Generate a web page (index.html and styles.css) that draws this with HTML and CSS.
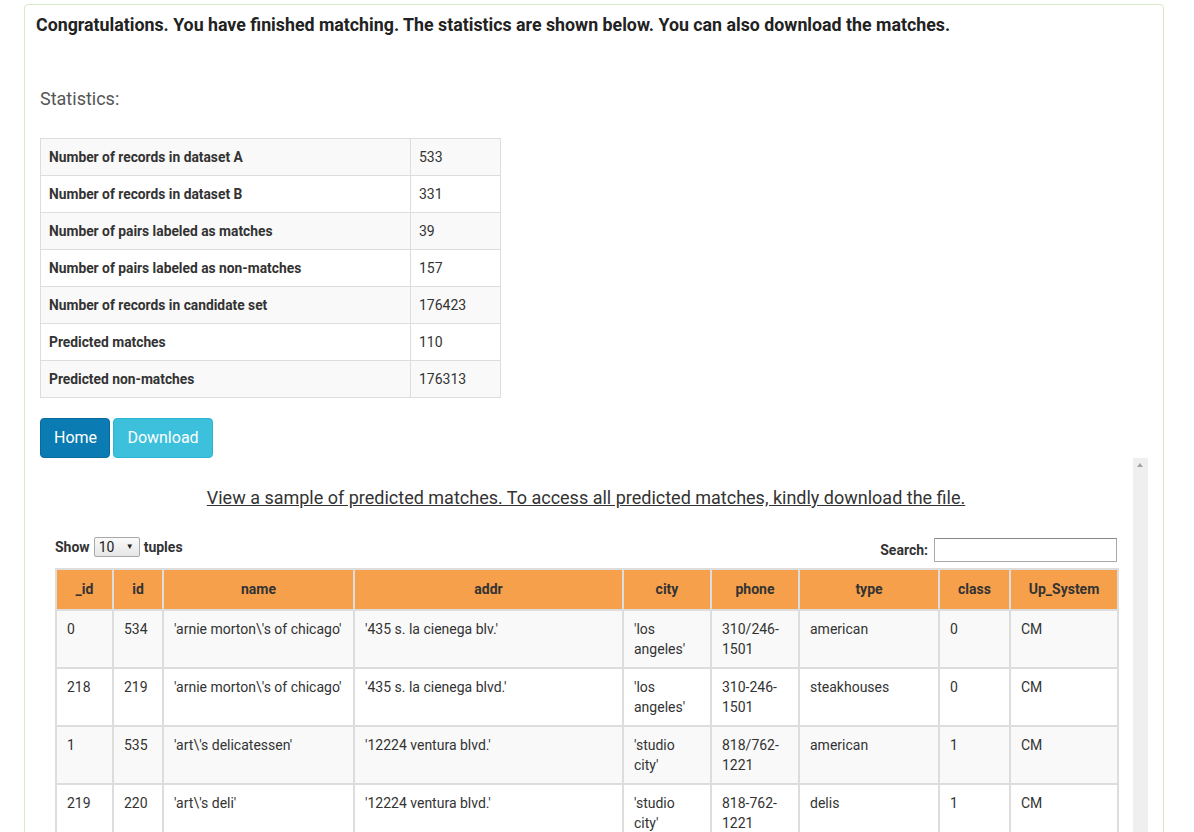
FILE: index.html
```html
<!DOCTYPE html>
<html>
<head>
<meta charset="utf-8">
<link rel="stylesheet" href="styles.css">
</head>
<body>
<div class="panel">
  <div class="panel-heading">Congratulations. You have finished matching. The statistics are shown below. You can also download the matches.</div>
  <div class="panel-body">
    <div class="stats-title">Statistics:</div>
    <table class="stats">
      <tr><th>Number of records in dataset A</th><td>533</td></tr>
      <tr><th>Number of records in dataset B</th><td>331</td></tr>
      <tr><th>Number of pairs labeled as matches</th><td>39</td></tr>
      <tr><th>Number of pairs labeled as non-matches</th><td>157</td></tr>
      <tr><th>Number of records in candidate set</th><td>176423</td></tr>
      <tr><th>Predicted matches</th><td>110</td></tr>
      <tr><th>Predicted non-matches</th><td>176313</td></tr>
    </table>
    <div class="buttons">
      <button class="btn btn-home">Home</button>
      <button class="btn btn-download">Download</button>
    </div>
    <div class="scroll-area">
      <div class="scroll-content">
        <div class="sample-link"><a href="#">View a sample of predicted matches. To access all predicted matches, kindly download the file.</a></div>
        <div class="controls">
          <div class="length">Show <span class="fake-select"><span class="sel-val">10</span><span class="sel-arrow">▼</span></span> tuples</div>
          <div class="search">Search: <input type="text" class="search-input"></div>
        </div>
        <table class="data">
          <colgroup>
            <col class="c1"><col class="c2"><col class="c3"><col class="c4"><col class="c5"><col class="c6"><col class="c7"><col class="c8"><col class="c9">
          </colgroup>
          <thead>
            <tr><th>_id</th><th>id</th><th>name</th><th>addr</th><th>city</th><th>phone</th><th>type</th><th>class</th><th>Up_System</th></tr>
          </thead>
          <tbody>
            <tr class="odd"><td>0</td><td>534</td><td>'arnie morton\'s of chicago'</td><td>'435 s. la cienega blv.'</td><td>'los angeles'</td><td>310/246-1501</td><td>american</td><td>0</td><td>CM</td></tr>
            <tr class="even"><td>218</td><td>219</td><td>'arnie morton\'s of chicago'</td><td>'435 s. la cienega blvd.'</td><td>'los angeles'</td><td>310-246-1501</td><td>steakhouses</td><td>0</td><td>CM</td></tr>
            <tr class="odd"><td>1</td><td>535</td><td>'art\'s delicatessen'</td><td>'12224 ventura blvd.'</td><td>'studio city'</td><td>818/762-1221</td><td>american</td><td>1</td><td>CM</td></tr>
            <tr class="even"><td>219</td><td>220</td><td>'art\'s deli'</td><td>'12224 ventura blvd.'</td><td>'studio city'</td><td>818-762-1221</td><td>delis</td><td>1</td><td>CM</td></tr>
          </tbody>
        </table>
      </div>
      <div class="fake-scrollbar"><span class="scroll-up"></span></div>
    </div>
  </div>
</div>
</body>
</html>
```
FILE: styles.css
```css
html, body {
  margin: 0;
  padding: 0;
  height: 832px;
  overflow: hidden;
  background: #fff;
}
body {
  font-family: Roboto, "Liberation Sans", sans-serif;
  font-size: 14px;
  line-height: 20px;
  color: #333;
}
.panel {
  box-sizing: border-box;
  width: 1140px;
  height: 900px;
  margin: 4px 0 0 24px;
  border: 1px solid #d6e9c6;
  border-radius: 4px;
}
.panel-heading {
  padding: 10px 11px 0 11px;
  font-size: 17.8px;
  font-weight: bold;
  line-height: 20px;
  color: #222;
}
.panel-body {
  padding: 0 15px;
}
.stats-title {
  margin-top: 53px;
  font-size: 18px;
  line-height: 22px;
  color: #555;
}
.stats {
  margin-top: 28px;
  border-collapse: collapse;
  width: 461px;
  table-layout: fixed;
}
.stats th, .stats td {
  border: 1px solid #ddd;
  padding: 8px 8px;
  line-height: 20px;
  text-align: left;
  font-size: 14px;
}
.stats th {
  width: 353px;
  font-weight: bold;
  font-size: 13.8px;
  color: #333;
}
.stats tr:nth-child(odd) {
  background: #f9f9f9;
}
.buttons {
  margin-top: 20px;
  display: flex;
  gap: 3px;
}
.btn {
  font-family: Roboto, "Liberation Sans", sans-serif;
  font-size: 16px;
  line-height: 20px;
  color: #fff;
  padding: 9px 13px;
  border-radius: 4px;
  border: 1px solid;
  cursor: pointer;
}
.btn-home {
  background: #0b7bb3;
  border-color: #096a9c;
  width: 70px;
}
.btn-download {
  background: #3dc0dc;
  border-color: #2bb5d4;
  width: 100px;
}
.scroll-area {
  display: flex;
  height: 420px;
}
.scroll-content {
  flex: 1;
  padding: 0 16px 0 15px;
  overflow: hidden;
}
.fake-scrollbar {
  width: 15px;
  background: #efefef;
  position: relative;
}
.scroll-up {
  position: absolute;
  left: 4px;
  top: 5px;
  width: 0;
  height: 0;
  border-left: 3.5px solid transparent;
  border-right: 3.5px solid transparent;
  border-bottom: 4px solid #a3a3a3;
}
.sample-link {
  margin-top: 29px;
  text-align: center;
  font-size: 18px;
  line-height: 22px;
}
.sample-link a {
  color: #333;
  text-decoration: underline;
}
.controls {
  margin-top: 28px;
  height: 25px;
  display: flex;
  justify-content: space-between;
  font-weight: bold;
  font-size: 14px;
}
.length {
  align-self: flex-start;
  line-height: 20px;
  display: flex;
  align-items: center;
  gap: 4px;
}
.fake-select {
  box-sizing: border-box;
  display: inline-flex;
  align-items: center;
  justify-content: space-between;
  width: 46px;
  height: 20px;
  border: 1px solid #a9a9a9;
  border-radius: 2px;
  background: linear-gradient(#fafafa, #e6e6e6);
  padding: 0 5px 0 4px;
  font-weight: normal;
  color: #222;
}
.sel-arrow {
  font-size: 8px;
  line-height: 10px;
}
.search {
  align-self: flex-end;
  display: flex;
  align-items: center;
  gap: 6px;
}
.search-input {
  box-sizing: border-box;
  width: 183px;
  height: 24px;
  border: 1px solid #aaa;
  border-top-color: #888;
  padding: 0 4px;
  margin: 0;
}
.data {
  margin-top: 6px;
  width: 1062px;
  table-layout: fixed;
  border-collapse: collapse;
}
.data col.c1 { width: 57px; }
.data col.c2 { width: 50px; }
.data col.c3 { width: 191px; }
.data col.c4 { width: 269px; }
.data col.c5 { width: 88px; }
.data col.c6 { width: 88px; }
.data col.c7 { width: 140px; }
.data col.c8 { width: 71px; }
.data col.c9 { width: 108px; }
.data th {
  background: #f7a04b;
  border: 2px solid #ddd;
  border-bottom: 1px solid #111;
  padding: 9px 10px 10px;
  font-weight: bold;
  text-align: center;
  line-height: 20px;
  color: #333;
}
.data td {
  border: 2px solid #ddd;
  padding: 8px 10px;
  line-height: 20px;
  vertical-align: top;
  text-align: left;
  color: #333;
}
.data tr.odd td { background: #f9f9f9; }
.data tr.even td { background: #fff; }
```
